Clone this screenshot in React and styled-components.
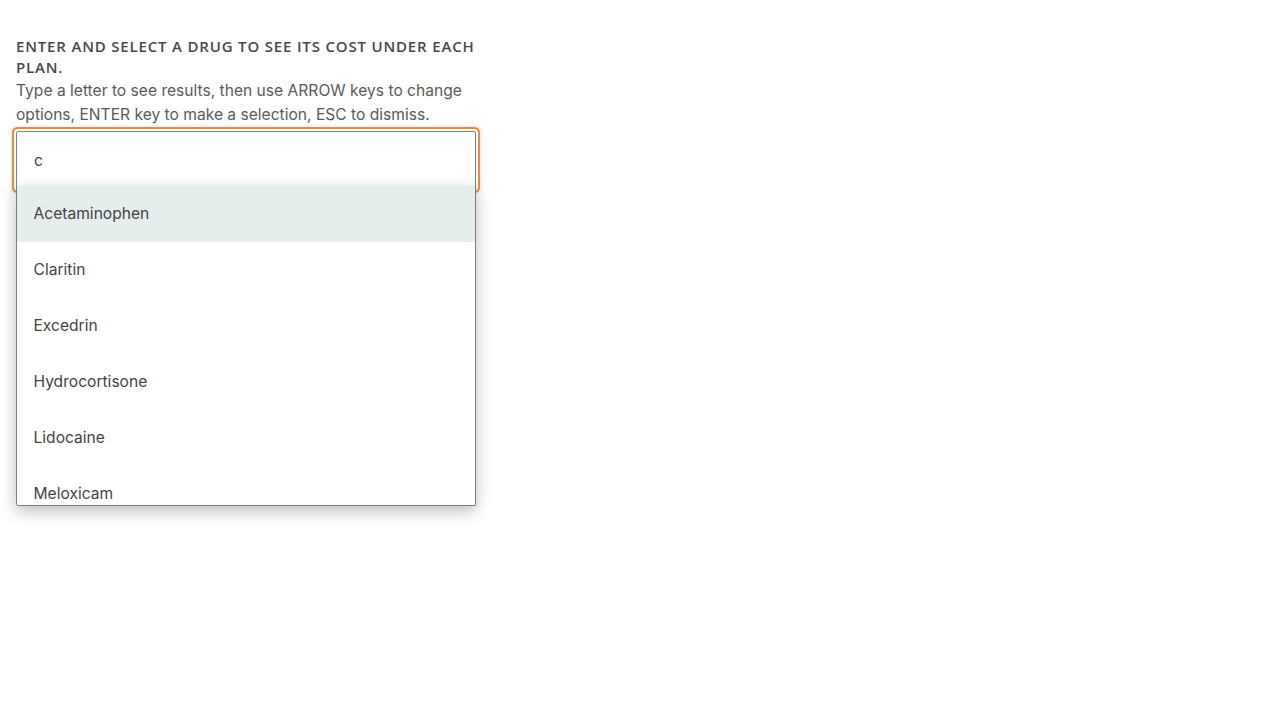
import React, { useState } from "react";
import styled, { createGlobalStyle } from "styled-components";

const GlobalStyle = createGlobalStyle`
  html, body {
    margin: 0;
    padding: 0;
    background: #fff;
  }
  body {
    font-family: "Inter", "Open Sans", sans-serif;
    color: #555;
  }
`;

const Page = styled.div`
  padding: 36px 16px 40px 16px;
  width: 464px;
`;

const Heading = styled.h2`
  margin: 0;
  font-family: "Open Sans", sans-serif;
  font-size: 15px;
  font-weight: 600;
  line-height: 21px;
  letter-spacing: 0.055em;
  text-transform: uppercase;
  color: #484848;
`;

const Hint = styled.p`
  margin: 1px 0 0 0;
  font-family: "Inter", sans-serif;
  font-size: 15.6px;
  line-height: 24px;
  color: #5a5a5a;
`;

const Combo = styled.div`
  width: 460px;
  margin-top: 4px;
`;

const Input = styled.input`
  position: relative;
  box-sizing: border-box;
  display: block;
  width: 460px;
  height: 58px;
  padding: 0 17px;
  border: 1.5px solid #808080;
  font-family: "Inter", sans-serif;
  font-size: 15.6px;
  color: #444;
  background: #fff;
  outline: none;
  box-shadow: 0 0 0 2px #fff, 0 0 0 4px #e38c4f, 0 0 4px 4px rgba(227, 140, 79, 0.4);
  border-radius: 2px;
`;

const List = styled.ul`
  position: relative;
  z-index: 1;
  box-sizing: border-box;
  width: 460px;
  height: 320px;
  margin: -3px 0 0 0;
  padding: 0;
  list-style: none;
  overflow: hidden;
  background: #fff;
  border: 1.5px solid #7a7a7a;
  border-top: none;
  border-radius: 0 0 2px 2px;
  box-shadow: 0 5px 16px rgba(0, 0, 0, 0.26);
`;

const Option = styled.li`
  box-sizing: border-box;
  height: 56px;
  display: flex;
  align-items: center;
  padding: 0 16.5px 2px 16.5px;
  font-family: "Inter", sans-serif;
  font-size: 15.6px;
  color: #444;
  background: ${(p) => (p.$active ? "#e6eeed" : "#fff")};
`;

const drugs = [
  "Acetaminophen",
  "Claritin",
  "Excedrin",
  "Hydrocortisone",
  "Lidocaine",
  "Meloxicam",
];

export default function App() {
  const [value, setValue] = useState("c");
  const [active] = useState(0);

  return (
    <>
      <GlobalStyle />
      <Page>
        <Heading>Enter and select a drug to see its cost under each plan.</Heading>
        <Hint>
          Type a letter to see results, then use ARROW keys to change options, ENTER key to make a
          selection, ESC to dismiss.
        </Hint>
        <Combo>
          <Input value={value} onChange={(e) => setValue(e.target.value)} />
          <List>
            {drugs.map((d, i) => (
              <Option key={d} $active={i === active}>
                {d}
              </Option>
            ))}
          </List>
        </Combo>
      </Page>
    </>
  );
}
